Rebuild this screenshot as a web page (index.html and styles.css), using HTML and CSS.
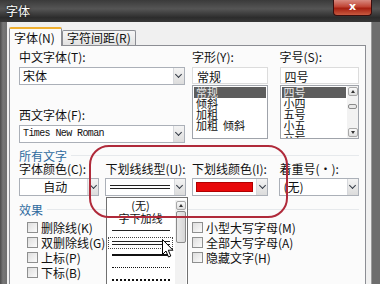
FILE: index.html
```html
<!DOCTYPE html>
<html lang="zh-CN">
<head>
    <meta charset="UTF-8">
    <meta name="viewport" content="width=device-width, initial-scale=1.0">
    <title>字体</title>
    <link rel="stylesheet" href="styles.css">
</head>
<body>
<div class="window">
    <div class="titlebar">
        <span class="title">字体</span>
        <span class="close">x</span>
    </div>
    <div class="frame">
        <div class="client">
            <div class="tabs">
                <div class="tab active">字体(<u>N</u>)</div>
                <div class="tab">字符间距(<u>R</u>)</div>
            </div>
            <div class="panel">
                <!-- font / style / size -->
                <div class="top-row">
                    <div class="col-font">
                        <div class="label">中文字体(<u>T</u>):</div>
                        <div class="combo"><span class="value">宋体</span><span class="arrow"></span></div>
                        <div class="label second">西文字体(<u>F</u>):</div>
                        <div class="combo"><span class="value mono">Times New Roman</span><span class="arrow"></span></div>
                    </div>
                    <div class="col-style">
                        <div class="label">字形(<u>Y</u>):</div>
                        <div class="textbox">常规</div>
                        <ul class="list">
                            <li class="sel">常规</li>
                            <li>倾斜</li>
                            <li>加粗</li>
                            <li>加粗&nbsp; 倾斜</li>
                        </ul>
                    </div>
                    <div class="col-size">
                        <div class="label">字号(<u>S</u>):</div>
                        <div class="textbox">四号</div>
                        <div class="list with-scroll">
                            <ul>
                                <li class="sel">四号</li>
                                <li>小四</li>
                                <li>五号</li>
                                <li>小五</li>
                                <li>六号</li>
                            </ul>
                            <div class="vscroll">
                                <span class="sbtn up"></span>
                                <span class="thumb"></span>
                                <span class="sbtn down"></span>
                            </div>
                        </div>
                    </div>
                </div>

                <!-- all text -->
                <div class="group">所有文字</div>
                <div class="all-row">
                    <div class="cell w81">
                        <div class="label">字体颜色(<u>C</u>):</div>
                        <div class="combo"><span class="value center">自动</span><span class="arrow"></span></div>
                    </div>
                    <div class="cell w81">
                        <div class="label">下划线线型(<u>U</u>):</div>
                        <div class="combo"><span class="value"><span class="dline"></span></span><span class="arrow"></span></div>
                    </div>
                    <div class="cell w77">
                        <div class="label">下划线颜色(<u>I</u>):</div>
                        <div class="combo"><span class="value"><span class="swatch"></span></span><span class="arrow"></span></div>
                    </div>
                    <div class="cell w80">
                        <div class="label">着重号(·):</div>
                        <div class="combo"><span class="value">(无)</span><span class="arrow"></span></div>
                    </div>
                </div>

                <!-- effects -->
                <div class="group">效果</div>
                <div class="effects">
                    <div class="fx-col left">
                        <div class="check"><span class="box"></span>删除线(<u>K</u>)</div>
                        <div class="check"><span class="box"></span>双删除线(<u>G</u>)</div>
                        <div class="check"><span class="box"></span>上标(<u>P</u>)</div>
                        <div class="check"><span class="box"></span>下标(<u>B</u>)</div>
                    </div>
                    <div class="fx-col">
                        <div class="check"><span class="box"></span>小型大写字母(<u>M</u>)</div>
                        <div class="check"><span class="box"></span>全部大写字母(<u>A</u>)</div>
                        <div class="check"><span class="box"></span>隐藏文字(<u>H</u>)</div>
                    </div>
                </div>
            </div>
        </div>
    </div>

    <!-- opened underline dropdown -->
    <div class="dropdown">
        <ul class="dd-items">
            <li>(无)</li>
            <li>字下加线</li>
            <li><span class="ln single"></span></li>
            <li class="focus"><span class="ln double"></span></li>
            <li><span class="ln thick"></span></li>
            <li><span class="ln dotted"></span></li>
            <li><span class="ln dotted heavy"></span></li>
        </ul>
        <div class="vscroll dd-scroll">
            <span class="sbtn up"></span>
            <span class="thumb long"></span>
        </div>
    </div>

    <!-- annotation -->
    <div class="mark"></div>

    <svg class="cursor" width="12" height="19" viewBox="0 0 12 19">
        <path d="M0.5 0.5 L0.5 15.5 L4 12 L6.5 18 L8.8 17 L6.3 11.2 L11 11.2 Z" fill="#fff" stroke="#000" stroke-width="1"/>
    </svg>
</div>
</body>
</html>
```

FILE: styles.css
```css
* {
    box-sizing: border-box;
}
body {
    margin: 0;
    width: 380px;
    height: 284px;
    overflow: hidden;
    background: #2e2e2e;
    font-family: "Noto Sans CJK SC", "Liberation Sans", sans-serif;
    font-size: 12px;
    color: #111;
}
u {
    text-decoration: none;
}
.window {
    position: relative;
    width: 380px;
    height: 284px;
}
.titlebar {
    height: 22px;
    display: flex;
    align-items: flex-start;
    background: linear-gradient(#3a3a3a, #555 40%, #2c2c2c 80%, #383838);
}
.title {
    color: #fff;
    margin: 3px 0 0 6px;
    line-height: 16px;
    text-shadow: 0 0 3px #000;
}
.close {
    margin-left: auto;
    margin-right: 8px;
    width: 39px;
    height: 16px;
    border: 1px solid #3a0e0e;
    border-top: none;
    border-radius: 0 0 4px 4px;
    background: linear-gradient(#d88a80, #c04434 45%, #a51f10 55%, #c85a40);
    color: #fff;
    font-family: "DejaVu Sans", sans-serif;
    font-weight: bold;
    font-size: 11px;
    line-height: 14px;
    text-align: center;
}
.frame {
    height: 262px;
    padding: 0 8px 0 7px;
    background: linear-gradient(90deg, #4a4a4a, #777 3px, #6e6e6e 7px);
}
.client {
    height: 262px;
    background: #f0f0f0;
    padding: 5px 5px 0 2px;
    border-right: 1px solid #9a9a9a;
}
.tabs {
    display: flex;
    align-items: flex-end;
    height: 18px;
}
.tab {
    height: 15px;
    padding: 0 4px;
    line-height: 14px;
    border: 1px solid #8c8e94;
    border-bottom: none;
    background: linear-gradient(#f6f6f6, #e2e2e2);
    border-radius: 2px 2px 0 0;
}
.tab.active {
    height: 19px;
    width: 53px;
    margin-bottom: -1px;
    padding-top: 2px;
    background: #fbfbfb;
    border-top: 2px solid #f0b030;
    position: relative;
}
.panel {
    height: 240px;
    border: 1px solid #8c8e94;
    border-bottom: none;
    background: #fbfbfb;
    padding: 4px 6px 0 9px;
}
.label {
    line-height: 14px;
    height: 14px;
    white-space: nowrap;
}
.top-row {
    display: flex;
    height: 93px;
}
.col-font {
    width: 167px;
    margin-right: 7px;
}
.col-style {
    width: 76px;
    margin-right: 12px;
}
.col-size {
    width: 80px;
}
.combo {
    display: flex;
    height: 18px;
    margin-top: 3px;
    border: 1px solid #abb0b8;
    background: #fff;
}
.combo .value {
    flex: 1;
    display: flex;
    align-items: center;
    padding-left: 3px;
    line-height: 16px;
    white-space: nowrap;
    overflow: hidden;
}
.combo .value.center {
    justify-content: center;
}
.value.mono {
    font-family: "Liberation Mono", monospace;
    font-size: 10px;
    letter-spacing: -0.6px;
}
.arrow {
    width: 11px;
    display: flex;
    align-items: center;
    justify-content: center;
    border-left: 1px solid #d6d8dc;
    background: linear-gradient(#f4f4f4, #dcdcdc);
}
.arrow::after {
    content: "";
    width: 4px;
    height: 4px;
    margin-top: -3px;
    border-right: 1.5px solid #333a45;
    border-bottom: 1.5px solid #333a45;
    transform: rotate(45deg);
}
.label.second {
    margin-top: 23px;
}
.textbox {
    height: 17px;
    margin-top: 3px;
    padding-left: 4px;
    line-height: 17px;
    border: 1px solid #dcdcdc;
    background: #fff;
}
.list {
    list-style: none;
    margin: 1px 0 0;
    padding: 1px 0 0;
    height: 54px;
    border: 1px solid #9fa3aa;
    background: #fff;
    overflow: hidden;
    font-size: 11px;
}
.list li,
.list ul li {
    height: 11px;
    line-height: 11px;
    padding-left: 3px;
    white-space: nowrap;
}
.list li.sel {
    background: #5d5d5d;
    color: #e6e6e6;
    margin: 0 1px;
    padding-left: 2px;
}
.list.with-scroll {
    display: flex;
    padding: 0;
}
.list.with-scroll ul {
    flex: 1;
    list-style: none;
    margin: 0;
    padding: 1px 0 0;
}
.vscroll {
    width: 11px;
    display: flex;
    flex-direction: column;
    align-items: center;
    background: #f2f2f2;
}
.sbtn {
    width: 10px;
    height: 9px;
    margin-top: 1px;
    border: 1px solid #a8a8a8;
    border-radius: 2px;
    background: linear-gradient(#fafafa, #dedede);
    display: flex;
    align-items: center;
    justify-content: center;
}
.sbtn.up::after,
.sbtn.down::after {
    content: "";
    border-left: 2.5px solid transparent;
    border-right: 2.5px solid transparent;
}
.sbtn.up::after {
    border-bottom: 3px solid #333;
}
.sbtn.down::after {
    border-top: 3px solid #333;
}
.sbtn.down {
    margin-top: auto;
    margin-bottom: 1px;
}
.thumb {
    width: 9px;
    height: 5px;
    margin-top: 8px;
    border: 1px solid #8a8a8a;
    border-radius: 2px;
    background: #e8e8e8;
}
.group {
    margin-top: 6px;
    height: 13px;
    line-height: 13px;
    color: #2f6a9e;
    display: flex;
    align-items: center;
}
.group::after {
    content: "";
    flex: 1;
    height: 1px;
    margin-left: 4px;
    background: #e6e9ec;
}
.all-row {
    display: flex;
}
.cell {
    margin-right: 6px;
}
.cell.w81 {
    width: 81px;
}
.cell.w77 {
    width: 77px;
    margin-right: 11px;
}
.cell.w80 {
    width: 80px;
    margin-right: 0;
}
.cell .combo {
    margin-top: 2px;
}
.dline {
    flex: 1;
    height: 4px;
    margin: 0 4px 0 1px;
    border-top: 1px solid #222;
    border-bottom: 1px solid #222;
}
.swatch {
    flex: 1;
    height: 10px;
    margin-right: 3px;
    background: #e8080a;
    border: 1px solid #b00000;
}
.all-row + .group {
    margin-top: 6px;
    height: 14px;
}
.effects {
    display: flex;
    margin-top: 4px;
}
.fx-col.left {
    width: 173px;
    padding-left: 8px;
}
.check {
    height: 15px;
    display: flex;
    align-items: center;
    white-space: nowrap;
}
.box {
    width: 11px;
    height: 11px;
    margin-right: 3px;
    border: 1px solid #8e8f8f;
    background: linear-gradient(135deg, #dedede, #fbfbfb);
}
.dropdown {
    position: absolute;
    left: 106px;
    top: 197px;
    width: 82px;
    height: 90px;
    display: flex;
    border: 1px solid #707070;
    background: #fff;
    font-size: 11px;
}
.dd-items {
    flex: 1;
    list-style: none;
    margin: 0;
    padding: 1px 0 0;
}
.dd-items li {
    height: 12.5px;
    display: flex;
    align-items: center;
    justify-content: center;
    line-height: 12px;
    margin: 0 2px 0 1px;
}
.dd-items li.focus {
    border: 1px dotted #444;
}
.ln {
    width: 58px;
}
.ln.single {
    border-top: 1px solid #222;
}
.ln.double {
    height: 4px;
    border-top: 1px solid #222;
    border-bottom: 1px solid #222;
}
.ln.thick {
    border-top: 2px solid #111;
}
.ln.dotted {
    border-top: 1px dotted #111;
}
.ln.dotted.heavy {
    border-top: 2px dotted #111;
}
.dd-scroll {
    margin: 2px 1px 0 0;
}
.thumb.long {
    height: 32px;
    width: 10px;
    margin-top: 1px;
    background: linear-gradient(90deg, #eaeaea, #d6d6d6);
}
.mark {
    position: absolute;
    left: 89px;
    top: 145px;
    width: 199px;
    height: 73px;
    border: 2px solid #b02a3a;
    border-radius: 20px;
}
.cursor {
    position: absolute;
    left: 162px;
    top: 239px;
}
```
